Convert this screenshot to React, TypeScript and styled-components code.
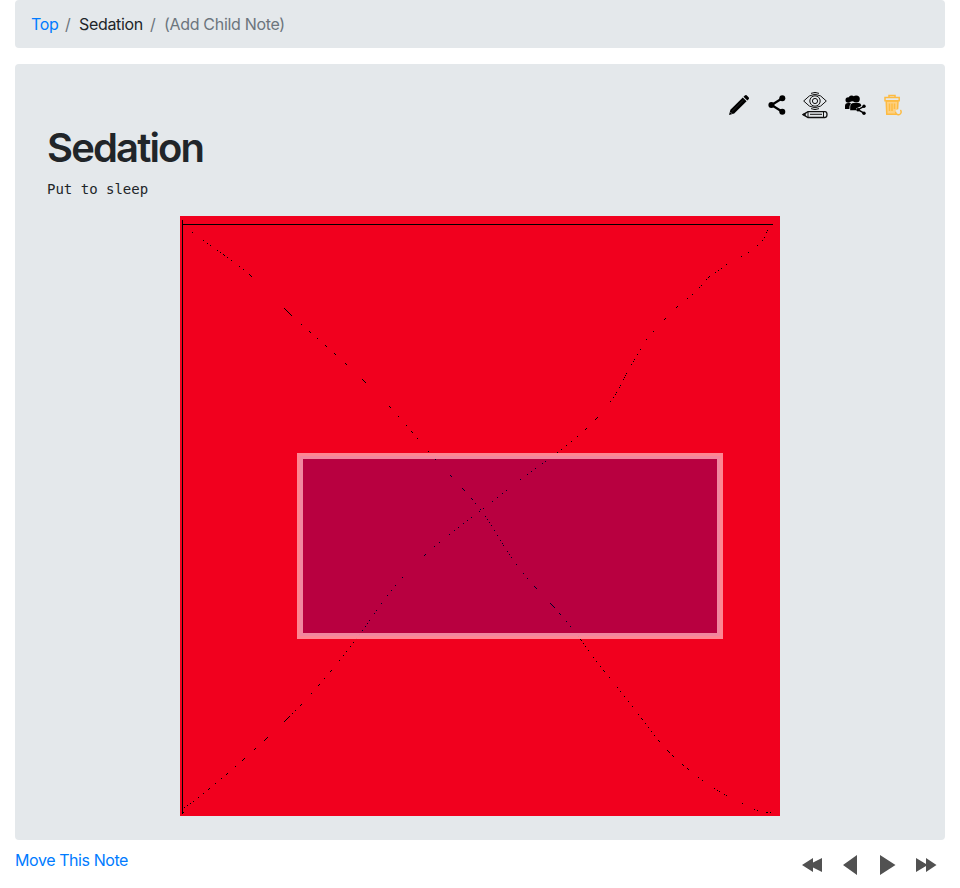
import React from "react";
import styled, { createGlobalStyle } from "styled-components";

const GlobalStyle = createGlobalStyle`
  *, *::before, *::after { box-sizing: border-box; }
  body {
    margin: 0;
    background: #fff;
    color: #212529;
    font: 400 16px/24px Inter, "Liberation Sans", sans-serif;
    overflow: hidden;
  }
`;

const Page = styled.div`
  height: 888px;
  padding: 0 15px;
`;

const Breadcrumb = styled.nav`
  display: flex;
  height: 48px;
  padding: 12px 16px;
  border-radius: 4px;
  background: #e4e8eb;
  letter-spacing: -0.32px;
`;

const Crumb = styled.span<{ $color: string; $width: number }>`
  width: ${(p) => p.$width}px;
  color: ${(p) => p.$color};
  white-space: nowrap;
`;

const Slash = styled.span`
  width: 21px;
  padding-left: 7px;
  color: #6c757d;
`;

const Panel = styled.main`
  height: 776px;
  margin-top: 16px;
  padding: 26px 32px 24px;
  border-radius: 4px;
  background: #e4e8eb;
`;

const Toolbar = styled.div`
  display: flex;
  height: 30px;
  align-items: center;
  justify-content: flex-end;
  gap: 12px;
  padding-right: 7px;
`;

const ToolGroup = styled.div`
  display: flex;
  align-items: center;
  gap: 12px;
  margin-right: 2px;
`;

const Title = styled.h1`
  margin: 4px 0 0;
  font-size: 40px;
  line-height: 48px;
  font-weight: 600;
  letter-spacing: -1.85px;
`;

const Body = styled.pre`
  margin: 7px 0 0;
  font: 14px/20px "DejaVu Sans Mono", monospace;
`;

const Figure = styled.div`
  display: flex;
  justify-content: center;
  margin-top: 17px;
`;

const Footer = styled.footer`
  display: flex;
  justify-content: space-between;
  height: 48px;
  padding-top: 8px;
`;

const Link = styled.a`
  color: #007bff;
  letter-spacing: -0.42px;
`;

const Nav = styled.div`
  display: flex;
  align-items: center;
  height: 34px;
`;

const Icon = styled.svg`
  display: block;
  flex: none;
`;

/* Diagonal runs of pixels: x, y, length; each run steps down and to the right. */
const falling: number[][] = [
  [12,16,1],[23,24,1],[27,27,1],[30,29,1],[37,34,1],[40,36,1],[43,38,2],[47,41,1],[51,44,1],[59,50,1],[63,53,1],
  [69,58,3],[104,92,8],[121,108,1],[129,115,2],[137,122,1],[145,129,2],[154,137,2],[165,147,2],[182,163,4],
  [209,190,2],[218,200,1],[226,209,1],[231,215,2],[237,222,1],[248,235,1],[255,243,1],[270,259,2],[282,272,3],
  [291,282,2],[295,287,1],[299,295,1],[305,300,1],[307,303,1],[309,306,1],[311,309,1],[314,314,1],[317,319,1],
  [320,324,1],[322,327,1],[323,329,1],[327,335,1],[329,338,1],[331,341,1],[336,348,1],[343,357,1],[347,362,1],
  [354,370,3],[370,387,5],[379,397,2],[386,405,1],[390,410,1],[398,420,1],[400,423,2],[403,427,1],[405,430,1],
  [408,434,1],[413,441,1],[416,445,1],[420,450,1],[423,454,2],[429,461,1],[437,471,1],[440,475,1],[444,480,1],
  [448,485,1],[452,490,1],[458,498,1],[461,502,2],[465,507,1],[468,511,1],[471,515,1],[474,519,1],[478,524,2],
  [487,534,3],[492,539,2],[502,548,2],[507,552,2],[518,561,1],[522,564,1],[534,572,1],[537,574,1],[539,575,1],
  [544,578,1],[546,579,1],[562,587,1],[574,593,1],[577,594,1],[586,596,1],[587,596,1],[590,596,1],
];

/* Runs that step down and to the left. */
const rising: number[][] = [
  [587,14,1],[586,16,1],[584,21,1],[582,24,1],[577,29,1],[568,36,1],[561,40,1],[546,48,1],[541,52,1],[538,54,1],
  [535,56,1],[529,60,2],[526,63,1],[521,69,1],[519,71,1],[512,78,1],[507,82,1],[497,90,2],[485,102,2],[473,115,1],
  [466,123,1],[460,133,1],[457,138,1],[454,143,1],[453,145,1],[451,148,1],[446,157,1],[445,159,1],[444,161,1],
  [443,163,1],[440,169,1],[439,171,1],[436,176,1],[435,178,1],[433,181,1],[430,185,1],[417,201,3],[406,212,2],
  [397,220,1],[391,225,1],[386,229,1],[381,233,1],[377,236,1],[365,245,1],[362,247,1],[355,252,1],[351,255,1],
  [347,258,1],[340,263,1],[326,274,1],[322,277,1],[317,281,1],[312,285,1],[303,292,1],[300,293,1],[291,301,1],
  [287,304,1],[283,307,1],[278,311,1],[274,314,1],[269,318,1],[259,326,1],[254,330,1],[245,338,2],[222,361,1],
  [215,369,1],[211,374,1],[207,379,1],[201,387,1],[196,394,1],[194,397,1],[189,404,1],[187,407,1],[185,410,1],
  [182,414,1],[179,418,1],[176,422,1],[173,426,1],[170,430,1],[166,435,1],[163,439,1],[159,444,1],[151,454,2],
  [144,462,1],[139,468,2],[131,477,1],[121,488,2],[115,494,1],[112,497,1],[109,500,6],[87,521,4],[75,532,2],
  [64,542,3],[55,550,1],[47,557,2],[41,562,1],[35,567,1],[29,572,2],[23,577,1],[18,581,1],[13,585,1],[10,587,1],
  [7,589,1],[4,591,1],[3,596,1],
];

const pixels = (runs: number[][], step: number) =>
  runs
    .flatMap(([x, y, n]) => Array.from({ length: n }, (_, i) => `M${x + i * step} ${y + i}h1v1h-1z`))
    .join("");

const Drawing = () => (
  <Icon width="600" height="600" viewBox="0 0 600 600" shapeRendering="crispEdges">
    <rect width="600" height="600" fill="#f1001e" />
    <path d="M2 4h1v594h-1zM2 8h591v1H2z" />
    <path d={pixels(falling, 1)} />
    <path d={pixels(rising, -1)} />
    <rect x="120" y="240" width="420" height="180" fill="#0000b3" fillOpacity="0.235" />
    <rect x="118.5" y="238.5" width="423" height="183" fill="none" stroke="#ff909c" strokeOpacity="0.93" strokeWidth="3" />
    <rect x="121.5" y="241.5" width="417" height="177" fill="none" stroke="#f590a7" strokeOpacity="0.93" strokeWidth="3" />
  </Icon>
);

const PencilIcon = () => (
  <Icon width="26" height="26" viewBox="0 0 26 26">
    <path d="M3 23l1.4-5.2L16.8 5.4l3.8 3.8L8.2 21.6zM17.5 4.7l1.3-1.3q1-.8 1.8-.2l2.2 2.2q.6.9-.2 1.8l-1.3 1.3z" />
    <path d="M6.2 19.2L17.5 8" stroke="#4b4d4f" strokeWidth=".5" />
    <path d="M4.5 20.2l1.6 1.6" stroke="#b4b7b9" strokeWidth=".7" />
  </Icon>
);

const ShareIcon = () => (
  <Icon width="26" height="26" viewBox="0 0 26 26">
    <path d="M18.3 6.2L7.5 13l10.8 6.8" fill="none" stroke="#000" strokeWidth="2.2" />
    <circle cx="18.3" cy="6.2" r="3" /><circle cx="7.4" cy="13" r="3" /><circle cx="18.3" cy="19.8" r="3" />
  </Icon>
);

const ReviewIcon = () => (
  <Icon width="26" height="28" viewBox="0 0 26 28" fill="none" stroke="#111" strokeWidth="1">
    <path d="M1.7 10Q13-3.5 24.3 10Q13 23.5 1.7 10zM9 2.4q4-2 8 0M9 17.6q4 2 8 0" />
    <circle cx="13" cy="10" r="5.2" /><circle cx="13" cy="10" r="2.6" />
    <path d="M1 23.6l5-2.9h17q2 0 2 2.9t-2 2.9H6z" strokeWidth="1.3" />
    <path d="M6 20.7v5.8M8 23.3h12M21.5 20.7v5.8" />
    <path d="M.8 23.6l2.4-1.4v2.8z" fill="#111" />
  </Icon>
);

const GroupShareIcon = () => (
  <Icon width="26" height="26" viewBox="0 0 26 26">
    <circle cx="6.3" cy="8" r="2.8" /><circle cx="9.6" cy="6.5" r="2.9" /><circle cx="14.2" cy="7" r="3.6" />
    <path d="M3 17v-3q0-3 3-3h3q-1.6 2-1.6 6zM8.2 18.2V15q0-4 3.5-4h4.6q2.8 0 3 3L14 16.4v1.8z" />
    <path d="M22 14.4l-6 3.3 6 3.4" fill="none" stroke="#000" strokeWidth="1.5" />
    <circle cx="22" cy="14.2" r="1.7" /><circle cx="16" cy="17.7" r="1.8" /><circle cx="22" cy="21.2" r="1.7" />
  </Icon>
);

const TrashIcon = () => (
  <Icon width="26" height="26" viewBox="0 0 26 26" fill="none" stroke="#fdbb42" strokeWidth="1.5">
    <path d="M6.2 9l.6 13.2h10.5L18 9z" fill="#fdd182" />
    <path d="M5 5.6h14.2v3.2H5zM9 5.4V3.5h6v1.9M9.5 11.5v7.5M12 11.5v7.5M14.5 11.5V17" />
    <circle cx="18.3" cy="20" r="2.8" fill="#e4e8eb" stroke="none" />
    <path d="M15.6 19.6a2.8 2.8 0 1 0 4.8-1.6" />
  </Icon>
);

const App = () => (
  <>
    <GlobalStyle />
    <Page>
      <Breadcrumb>
        <Crumb $color="#007bff" $width={27}>Top</Crumb>
        <Slash>/</Slash>
        <Crumb $color="#212529" $width={64}>Sedation</Crumb>
        <Slash>/</Slash>
        <Crumb $color="#6c757d" $width={122}>(Add Child Note)</Crumb>
      </Breadcrumb>
      <Panel>
        <Toolbar>
          <ToolGroup>
            <PencilIcon />
            <ShareIcon />
            <ReviewIcon />
          </ToolGroup>
          <GroupShareIcon />
          <TrashIcon />
        </Toolbar>
        <Title>Sedation</Title>
        <Body>Put to sleep</Body>
        <Figure><Drawing /></Figure>
      </Panel>
      <Footer>
        <Link>Move This Note</Link>
        <Nav>
          <Icon width="144" height="34" viewBox="0 0 144 34" fill="#515151">
            <path d="M1 17l11-7v4.4L21 10v14l-9-4.4V24zM42 17L56 7v20zM79 7l15.5 10L79 27zM115 10l10 6v-6l10.5 7L125 24v-6l-10 6z" />
          </Icon>
        </Nav>
      </Footer>
    </Page>
  </>
);

export default App;
